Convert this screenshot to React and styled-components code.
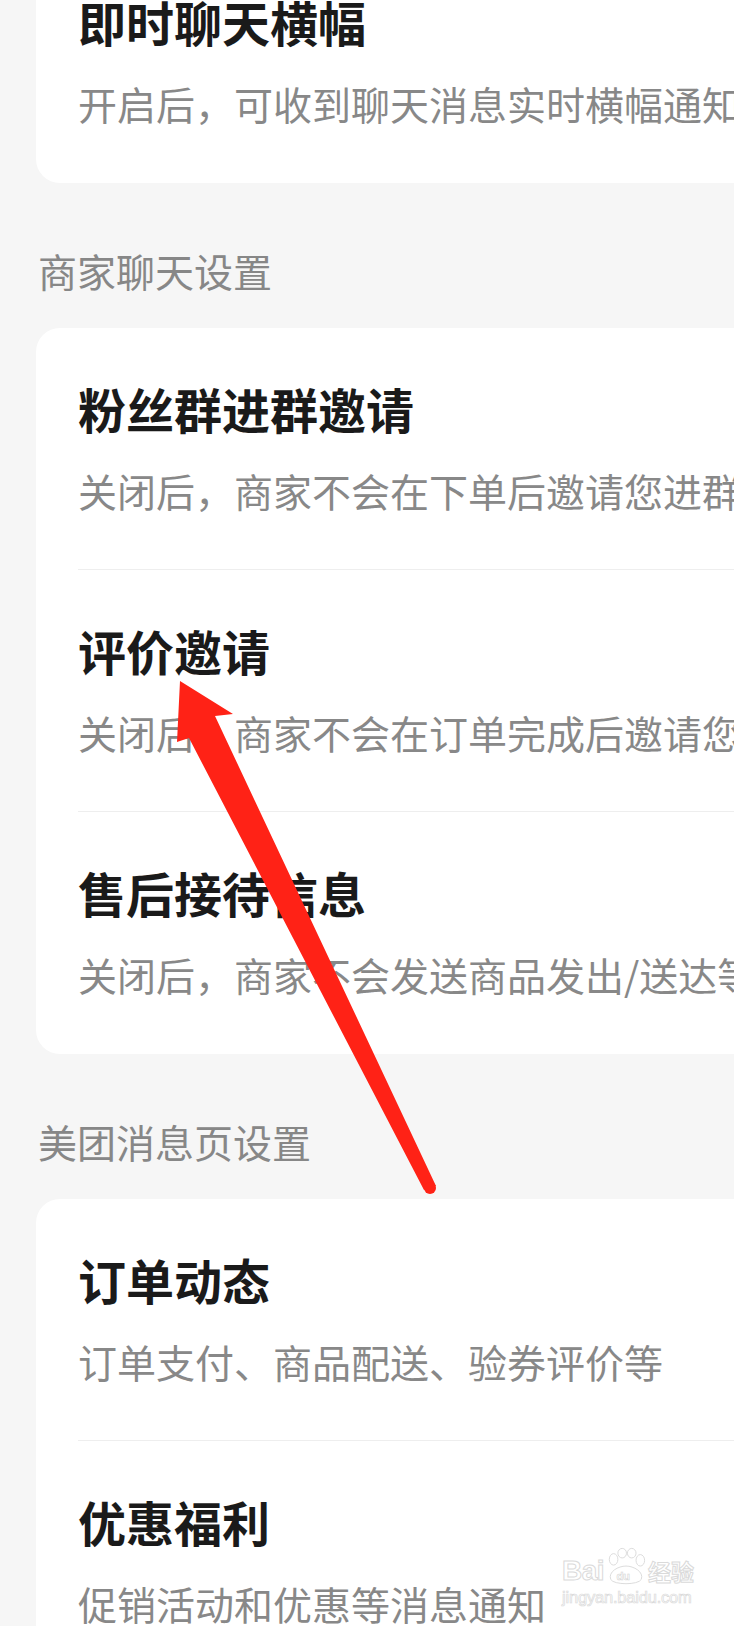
import React from 'react';
import styled, {createGlobalStyle} from "styled-components"

const GlobalStyle = createGlobalStyle`
  html, body {
    margin: 0;
    padding: 0;
    background: #f6f6f6;
    overflow: hidden;
  }
  * {
    box-sizing: border-box;
  }
`;

const sections = [
    {
        header: null,
        first: true,
        items: [
            {title: "即时聊天横幅", desc: "开启后，可收到聊天消息实时横幅通知"},
        ],
    },
    {
        header: "商家聊天设置",
        items: [
            {title: "粉丝群进群邀请", desc: "关闭后，商家不会在下单后邀请您进群"},
            {title: "评价邀请", desc: "关闭后，商家不会在订单完成后邀请您评价"},
            {title: "售后接待信息", desc: "关闭后，商家不会发送商品发出/送达等信息"},
        ],
    },
    {
        header: "美团消息页设置",
        items: [
            {title: "订单动态", desc: "订单支付、商品配送、验券评价等"},
            {title: "优惠福利", desc: "促销活动和优惠等消息通知"},
        ],
    },
];

export default function App(){
    return(
        <>
            <GlobalStyle/>
            <Page>
                {sections.map((section, i) => (
                    <React.Fragment key={i}>
                        {section.header && <SectionHeader>{section.header}</SectionHeader>}
                        <Card first={section.first}>
                            {section.items.map((item, j) => (
                                <Row key={j} last={j === section.items.length - 1}>
                                    <Title>{item.title}</Title>
                                    <Desc>{item.desc}</Desc>
                                </Row>
                            ))}
                        </Card>
                    </React.Fragment>
                ))}

                <Arrow viewBox="0 0 734 1626" width="734" height="1626">
                    <polygon
                        points="180,681 233,714 215,716 436,1186 424,1190 189,738 177,742"
                        fill="#ff2216"
                    />
                    <circle cx="430" cy="1188" r="6" fill="#ff2216"/>
                </Arrow>

                <Watermark>
                    <BrandLine>
                        <span>Bai</span>
                        <Paw viewBox="0 0 44 40" width="42" height="40">
                            <ellipse cx="9" cy="12" rx="4.5" ry="6" />
                            <ellipse cx="18" cy="5.5" rx="4.5" ry="5" />
                            <ellipse cx="28" cy="5.5" rx="4.5" ry="5" />
                            <ellipse cx="37" cy="13" rx="4.5" ry="6" />
                            <path d="M6 33 C3 25 14 19 22 19 C30 19 41 25 38 33 C35 39 9 39 6 33 Z" />
                            <text x="12" y="34" fontSize="12" fontWeight="700" fontFamily="Liberation Sans, sans-serif">du</text>
                        </Paw>
                        <BrandCn>经验</BrandCn>
                    </BrandLine>
                    <SiteLine>jingyan.baidu.com</SiteLine>
                </Watermark>
            </Page>
        </>
    )
}


// STYLED COMPONENT
const Page = styled.div`
    position: relative;
    width: 734px;
    height: 1626px;
    overflow: hidden;
    padding-left: 36px;
    font-family: "Noto Sans CJK SC", "Noto Sans", sans-serif;
`;

const SectionHeader = styled.div`
    margin: 64px 0 35px 2px;
    font-size: 39px;
    line-height: 46px;
    color: #878787;
    white-space: nowrap;
`;

const Card = styled.div`
    margin-top: ${props => props.first ? "-59px" : "0"};
    margin-right: -40px;
    background: #ffffff;
    border-radius: 24px;
`;

const Row = styled.div`
    margin-left: 42px;
    padding: 52px 0 ${props => props.last ? "56px" : "55px"} 0;
    border-bottom: ${props => props.last ? "none" : "1px solid #eeeeee"};
`;

const Title = styled.div`
    font-size: 48px;
    line-height: 56px;
    font-weight: 700;
    color: #1a1a1a;
    white-space: nowrap;
`;

const Desc = styled.div`
    margin-top: 30px;
    font-size: 39px;
    line-height: 48px;
    color: #888888;
    white-space: nowrap;
`;

const Arrow = styled.svg`
    position: absolute;
    left: 0;
    top: 0;
    pointer-events: none;
`;

const Watermark = styled.div`
    position: absolute;
    left: 562px;
    top: 1547px;
    display: flex;
    flex-direction: column;
    align-items: flex-start;
    pointer-events: none;
`;

const BrandLine = styled.div`
    display: flex;
    align-items: flex-end;
    gap: 1px;
    font-family: "Liberation Sans", sans-serif;
    font-weight: 700;
    font-size: 28px;
    line-height: 30px;
    letter-spacing: -0.5px;
    color: #ffffff;
    -webkit-text-stroke: 1px #dadada;
`;

const BrandCn = styled.span`
    font-family: "Noto Sans CJK SC", sans-serif;
    font-size: 23px;
    line-height: 30px;
    letter-spacing: 0;
`;

const Paw = styled.svg`
    margin-bottom: -1px;
    fill: #ffffff;
    stroke: #dadada;
    stroke-width: 1;
    text {
        fill: #ffffff;
        stroke: #d4d4d4;
        stroke-width: 0.6;
    }
`;

const SiteLine = styled.div`
    margin-top: 2px;
    font-family: "Liberation Sans", sans-serif;
    font-size: 16.5px;
    line-height: 18px;
    letter-spacing: -0.2px;
    color: #ffffff;
    -webkit-text-stroke: 0.7px #dadada;
`;
